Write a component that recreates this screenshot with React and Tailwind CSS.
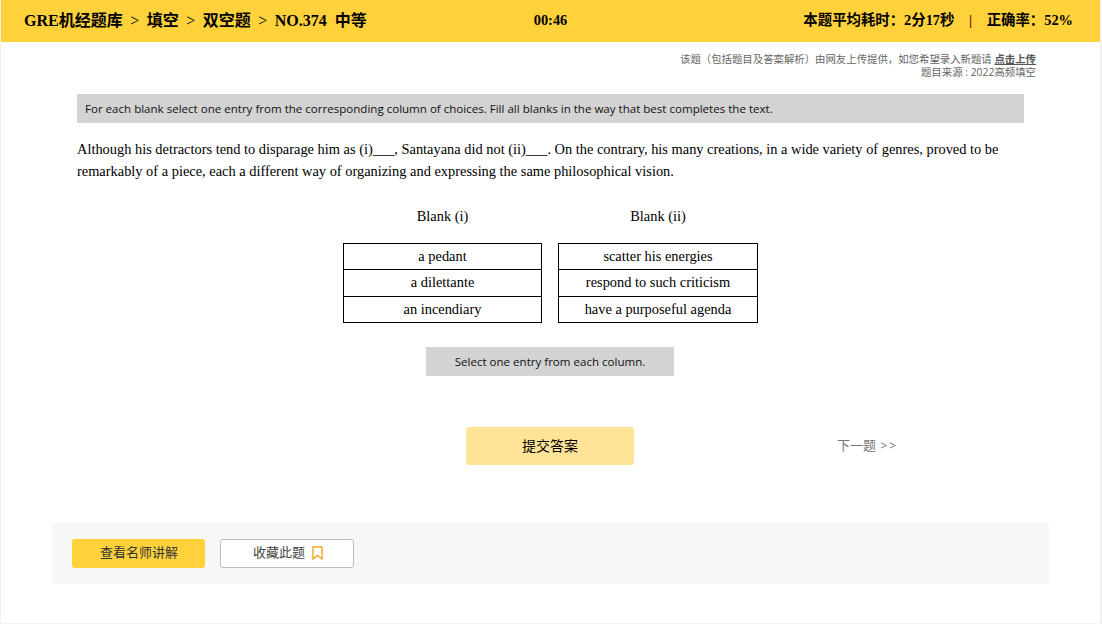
const serif = "font-['Liberation_Serif','Noto_Sans_CJK_SC',serif]";
const sans = "font-['Open_Sans','Noto_Sans_CJK_SC',sans-serif]";

const blankOne = ["a pedant", "a dilettante", "an incendiary"];
const blankTwo = ["scatter his energies", "respond to such criticism", "have a purposeful agenda"];

const rowClass = ["h-[25px]", "h-[27px] border-t border-black", "h-[26px] border-t border-black"];

const Sep = () => <span className="mx-[3.5px] font-normal">&gt;</span>;

const ChoiceColumn = ({ title, items, width }) => (
  <div className={`flex flex-col items-center ${width}`}>
    <div className="h-[22px] text-[14.4px] leading-[22px] text-black">{title}</div>
    <div className="mt-[16px] w-full border border-black">
      {items.map((item, i) => (
        <div key={item} className={`text-center text-[14.4px] leading-[25px] text-black ${rowClass[i]}`}>
          {item}
        </div>
      ))}
    </div>
  </div>
);

const App = () => {
  return (
    <div className={`h-[624px] w-[1102px] overflow-hidden bg-white ${serif}`}>
      <div className="h-[624px] w-[1102px] border-b border-l border-r-2 border-[#f2f2f2]">
        <header className="flex h-[42px] items-center justify-between bg-[#ffd23c] pl-[23px] pr-[23px] text-black">
          <div className="w-[460px] whitespace-pre text-[16px] font-bold">
            GRE机经题库 <Sep /> 填空 <Sep /> 双空题 <Sep /> NO.374{"  "}中等
          </div>
          <div className="text-[14.4px] font-bold">00:46</div>
          <div className="flex w-[460px] justify-end whitespace-pre pr-[4px] text-[14.4px] font-bold">
            本题平均耗时：2分17秒
            <span className="mx-[14.5px] font-bold text-[#7a0000]">|</span>
            正确率：52%
          </div>
        </header>

        <div className={`mt-[11px] pr-[64px] text-right text-[10.4px] leading-[13px] text-[#666666] ${sans}`}>
          <p>
            该题（包括题目及答案解析）由网友上传提供，如您希望录入新题请{" "}
            <span className="font-semibold text-[#555555] underline">点击上传</span>
          </p>
          <p>题目来源 : 2022高频填空</p>
        </div>

        <div className="ml-[76px] mt-[15px] w-[947px]">
          <div className={`flex h-[29px] items-center bg-[#d3d3d3] pl-[8px] pt-px text-[11.55px] text-[#111111] ${sans}`}>
            For each blank select one entry from the corresponding column of choices. Fill all blanks in the way that best completes the text.
          </div>
          <p className="mt-[15px] text-[14.4px] leading-[22px] text-black">
            Although his detractors tend to disparage him as (i)___, Santayana did not (ii)___. On the contrary, his many creations, in a wide variety of genres, proved to be remarkably of a piece, each a different way of organizing and expressing the same philosophical vision.
          </p>
        </div>

        <div className="ml-[342px] mt-[23px] flex gap-[16px]">
          <ChoiceColumn title="Blank (i)" items={blankOne} width="w-[199px]" />
          <ChoiceColumn title="Blank (ii)" items={blankTwo} width="w-[200px]" />
        </div>

        <div className={`ml-[425px] mt-[24px] flex h-[29px] w-[248px] items-center justify-center bg-[#d3d3d3] pt-px text-[11.55px] text-[#111111] ${sans}`}>
          Select one entry from each column.
        </div>

        <div className="ml-[465px] mt-[51px] flex items-center">
          <button className={`h-[38px] w-[168px] rounded-[3px] bg-[#ffe498] pb-[2px] text-[14px] text-black ${sans}`}>
            提交答案
          </button>
          <div className={`ml-[203px] text-[13px] text-[#777777] ${sans}`}>
            下一题 <span className="ml-[1px] text-[12px] tracking-[2px]">&gt;&gt;</span>
          </div>
        </div>

        <div className={`ml-[51px] mt-[58px] flex h-[61px] w-[997px] items-center gap-[15px] bg-[#f7f7f7] pl-[20px] ${sans}`}>
          <button className="h-[29px] w-[133px] rounded-[3px] bg-[#ffd23c] pb-px pl-px text-[13px] text-[#333333]">
            查看名师讲解
          </button>
          <button className="flex h-[29px] w-[134px] items-center justify-center gap-[7px] rounded-[3px] border border-[#bbbbbb] bg-white pb-px pl-[2px] text-[13px] text-[#444444]">
            收藏此题
            <svg width="11" height="14" viewBox="0 0 11 14" fill="none" stroke="#f5a623" strokeWidth="1.4">
              <path d="M1 1h9v12L5.5 9.5 1 13z" />
            </svg>
          </button>
        </div>
      </div>
    </div>
  );
};

export default App;
